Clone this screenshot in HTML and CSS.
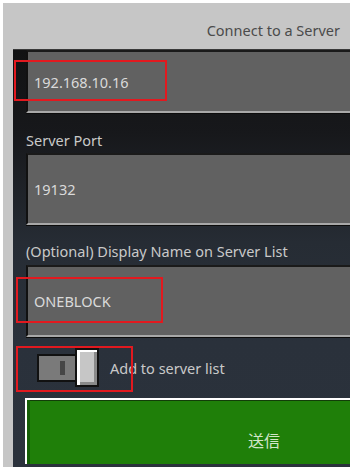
FILE: index.html
```html
<!DOCTYPE html>
<html>
<head>
    <meta charset="utf-8">
    <link rel="stylesheet" href="styles.css">
</head>
<body>
<div id="frame">
    <div id="header"><span class="title">Connect to a Server</span></div>
    <div id="panel">
        <div class="field field-first"><span class="value">192.168.10.16</span></div>
        <div class="label">Server Port</div>
        <div class="field"><span class="value">19132</span></div>
        <div class="label label-second">(Optional) Display Name on Server List</div>
        <div class="field"><span class="value">ONEBLOCK</span></div>
        <div class="togglerow">
            <div class="toggle">
                <div class="track"><span class="notch"></span></div>
                <div class="knob"></div>
            </div>
            <span class="toggletext">Add to server list</span>
        </div>
        <div class="submit">送信</div>
    </div>
</div>

<!-- annotation boxes -->
<div class="redbox" id="box-ip"></div>
<div class="redbox" id="box-name"></div>
<div class="redbox" id="box-toggle"></div>
</body>
</html>
```

FILE: styles.css
```css
body {
    margin: 0;
    padding: 0;
    background-color: #ffffff;
    font-family: 'Noto Sans', 'Noto Sans CJK JP', sans-serif;
    font-size: 14.5px;
    overflow: hidden;
}

#frame {
    margin: 3px 0 0 3px;
    height: 464px;
    background-color: #c6c6c6;
    overflow: hidden;
}

#header {
    height: 46px;
    box-sizing: border-box;
    padding: 8px 10px 0 0;
    display: flex;
    align-items: center;
    justify-content: flex-end;
}

.title {
    color: #4b4b4b;
    line-height: 18px;
}

#panel {
    margin-left: 10px;
    width: 520px;
    height: 418px;
    box-sizing: border-box;
    padding-left: 13px;
    border-top: 1px solid #3a3a3a;
    background: linear-gradient(#111213 0%, #17181b 20%, #262c34 46%, #2a313b 70%, #2b323c 100%);
    display: flex;
    flex-direction: column;
}

.field {
    height: 72px;
    box-sizing: border-box;
    flex-shrink: 0;
    background-color: #616161;
    border-top: 2px solid #1a1a1a;
    border-left: 2px solid #111111;
    border-bottom: 2px solid #a8a8a8;
    box-shadow: 0 1px 0 #0c0c0c;
    padding-left: 6px;
    display: flex;
    align-items: center;
    color: #dadada;
}

.field-first {
    height: 63px;
}

.value {
    line-height: 18px;
}

.label {
    height: 40px;
    box-sizing: border-box;
    flex-shrink: 0;
    padding-top: 18px;
    line-height: 18px;
    color: #c9c9c9;
}

.label-second {
    padding-top: 17px;
}

.togglerow {
    height: 61px;
    flex-shrink: 0;
    display: flex;
    align-items: center;
    padding-left: 11px;
}

.toggle {
    display: flex;
    align-items: center;
}

.track {
    width: 40px;
    height: 28px;
    box-sizing: border-box;
    border: 2px solid #111111;
    background-color: #7a7a7a;
    display: flex;
    align-items: center;
    padding-left: 21px;
}

.notch {
    width: 5px;
    height: 14px;
    background-color: #464646;
}

.knob {
    width: 24px;
    height: 39px;
    box-sizing: border-box;
    margin-left: -2px;
    border: 2px solid #111111;
    background-color: #c6c6c6;
    box-shadow: inset 3px 2px 0 #ffffff, inset -3px -3px 0 #8a8a8a;
}

.toggletext {
    margin-left: 11px;
    color: #c9c9c9;
    line-height: 18px;
}

.submit {
    width: 476px;
    height: 66px;
    box-sizing: border-box;
    flex-shrink: 0;
    margin-left: -1px;
    border-top: 2px solid #ffffff;
    border-left: 2px solid #ffffff;
    background-color: #1f7f09;
    box-shadow: inset 3px 0 0 #155e06, inset 0 1px 0 #123d08;
    padding-top: 15px;
    display: flex;
    align-items: center;
    justify-content: center;
    color: #d2e6c9;
    font-size: 16px;
}

.redbox {
    position: absolute;
    box-sizing: border-box;
    border: 2px solid #e2191f;
}

#box-ip {
    left: 14px;
    top: 60px;
    width: 153px;
    height: 41px;
}

#box-name {
    left: 16px;
    top: 277px;
    width: 147px;
    height: 46px;
}

#box-toggle {
    left: 16px;
    top: 346px;
    width: 117px;
    height: 46px;
}
```
